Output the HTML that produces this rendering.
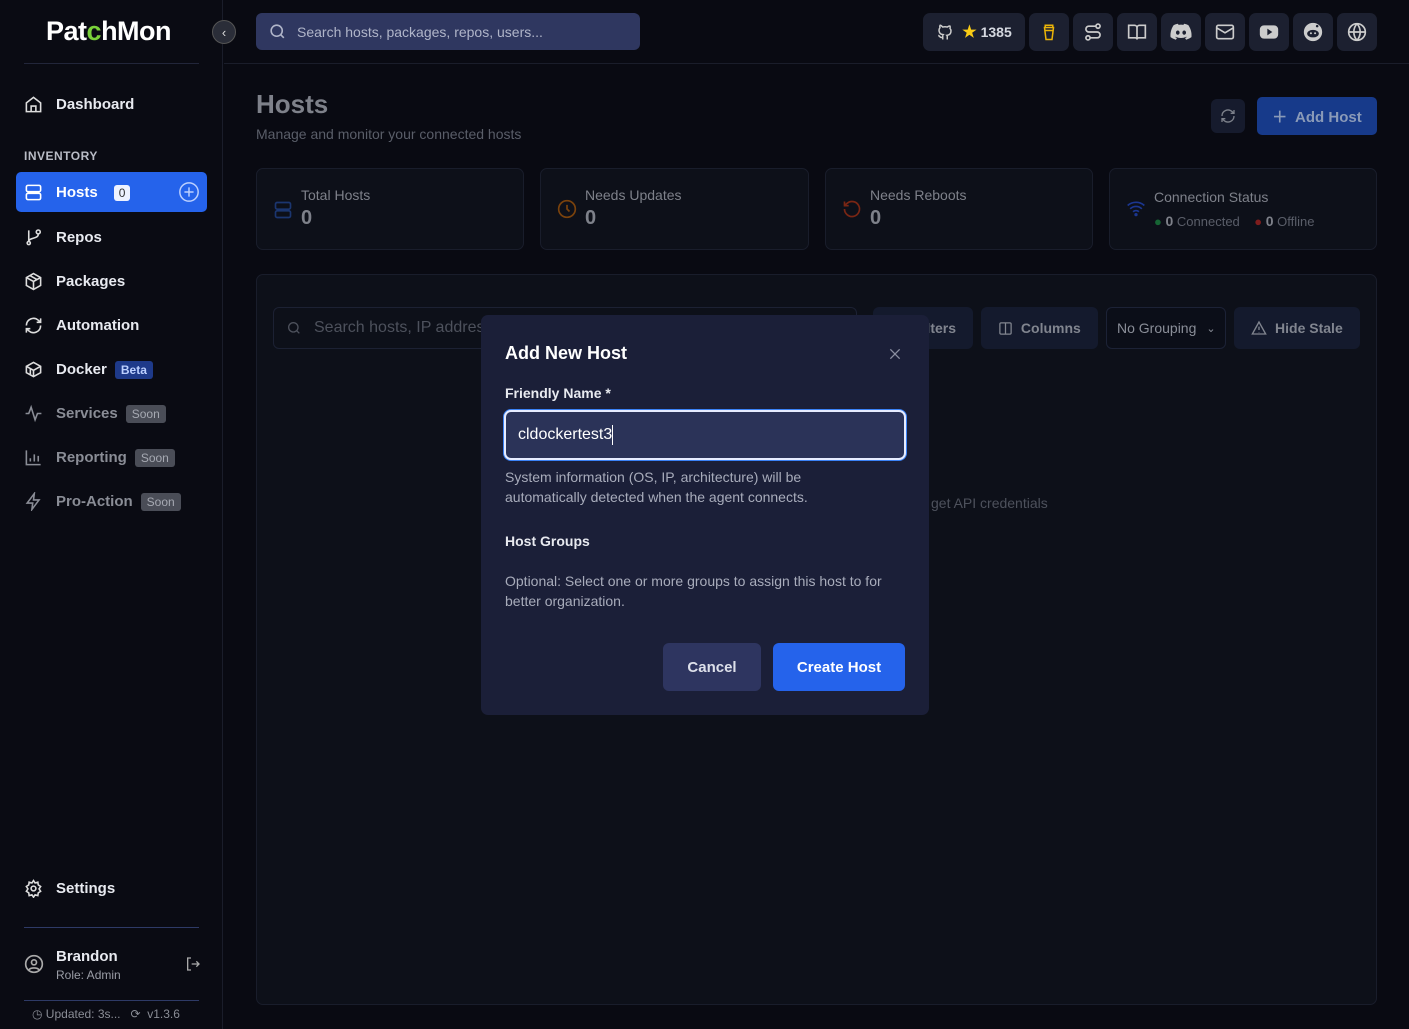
<!DOCTYPE html>
<html><head><meta charset="utf-8"><style>
*{box-sizing:border-box;margin:0;padding:0}
body{width:1409px;height:1029px;overflow:hidden;background:#090a12;font-family:"Liberation Sans",sans-serif;position:relative;color:#fff}
.abs{position:absolute}
svg{display:block}
.side{left:0;top:0;width:223px;height:1029px;background:#0a0b13;border-right:1px solid #1a1d2a}
.nav{position:absolute;left:24px;display:flex;align-items:center;font-size:15px;font-weight:bold;color:#e8eaf0}
.nav svg{margin-right:13px}
.soon{background:#4a4d57;color:#a6a9b2;font-size:12px;font-weight:normal;padding:2px 6px;border-radius:3px;margin-left:8px}
.ib{position:absolute;top:13px;width:40px;height:38px;background:#1c2030;border-radius:7px;display:flex;align-items:center;justify-content:center}
.card{position:absolute;top:168px;height:82px;background:#0d1019;border:1px solid #191d2b;border-radius:7px}
.card .t{position:absolute;left:44px;top:18px;font-size:14px;color:#7e818a}
.card .n{position:absolute;left:44px;top:38px;font-size:20px;font-weight:bold;color:#7e818a}
.card svg{position:absolute;left:16px;top:30px}
.tb{position:absolute;top:307px;height:42px;background:#141a2d;border-radius:6px;color:#81858f;font-size:14px;font-weight:bold;display:flex;align-items:center;justify-content:center}
</style></head><body>

<!-- sidebar -->
<div class="abs side">
  <div class="abs" style="left:46px;top:16px;font-size:27px;font-weight:bold;letter-spacing:-0.5px">Pat<span style="color:#7ad13a">c</span>hMon</div>
  <div class="abs" style="left:24px;top:63px;width:175px;height:1px;background:#22263a"></div>
  <div class="nav" style="top:95px"><svg width="19" height="19" viewBox="0 0 24 24" fill="none" stroke="#ddd" stroke-width="2"><path d="M3 10l9-7 9 7v11H3z"/><path d="M9 21v-7h6v7"/></svg>Dashboard</div>
  <div class="abs" style="left:24px;top:149px;font-size:12px;font-weight:bold;color:#b9bcc6;letter-spacing:0.5px">INVENTORY</div>
  <div class="abs" style="left:16px;top:172px;width:191px;height:40px;background:#2563eb;border-radius:5px"></div>
  <div class="nav" style="top:183px;color:#fff"><svg width="19" height="19" viewBox="0 0 24 24" fill="none" stroke="#fff" stroke-width="2"><rect x="3" y="3" width="18" height="8" rx="2"/><rect x="3" y="13" width="18" height="8" rx="2"/></svg>Hosts<span style="background:#eef2ff;color:#333;font-size:12px;font-weight:normal;padding:1px 5px;border-radius:3px;margin-left:16px">0</span></div>
  <svg class="abs" style="left:178px;top:181px" width="22" height="22" viewBox="0 0 24 24" fill="none" stroke="#bcd0ff" stroke-width="1.6"><circle cx="12" cy="12" r="10"/><path d="M12 7v10M7 12h10"/></svg>
  <div class="nav" style="top:228px"><svg width="19" height="19" viewBox="0 0 24 24" fill="none" stroke="#ddd" stroke-width="2"><circle cx="6" cy="19" r="2"/><circle cx="18" cy="5" r="2.5"/><path d="M6 3v14M18 8c0 6-12 4-12 9"/></svg>Repos</div>
  <div class="nav" style="top:272px"><svg width="19" height="19" viewBox="0 0 24 24" fill="none" stroke="#ddd" stroke-width="2"><path d="M12 2l9 5v10l-9 5-9-5V7z"/><path d="M3 7l9 5 9-5M12 12v10M7.5 4.5l9 5"/></svg>Packages</div>
  <div class="nav" style="top:316px"><svg width="19" height="19" viewBox="0 0 24 24" fill="none" stroke="#ddd" stroke-width="2"><path d="M21 12a9 9 0 0 1-15 6.7L3 16M3 12a9 9 0 0 1 15-6.7L21 8M21 3v5h-5M3 21v-5h5"/></svg>Automation</div>
  <div class="nav" style="top:360px"><svg width="19" height="19" viewBox="0 0 24 24" fill="none" stroke="#ddd" stroke-width="2"><path d="M3 8l9-5 9 5v8l-9 5-9-5z"/><path d="M3 8l9 5 9-5M12 13v8M8 11v7"/></svg>Docker<span style="background:#1e3a8a;color:#bcd0ff;font-size:12px;font-weight:bold;padding:2px 6px;border-radius:3px;margin-left:8px">Beta</span></div>
  <div class="nav" style="top:404px;color:#8a8d96"><svg width="19" height="19" viewBox="0 0 24 24" fill="none" stroke="#8a8d96" stroke-width="2"><path d="M2 12h4l3-8 5 16 3-8h5"/></svg>Services<span class="soon">Soon</span></div>
  <div class="nav" style="top:448px;color:#8a8d96"><svg width="19" height="19" viewBox="0 0 24 24" fill="none" stroke="#8a8d96" stroke-width="2"><path d="M3 3v18h18M8 17v-4M13 17V8M18 17v-7"/></svg>Reporting<span class="soon">Soon</span></div>
  <div class="nav" style="top:492px;color:#8a8d96"><svg width="19" height="19" viewBox="0 0 24 24" fill="none" stroke="#8a8d96" stroke-width="2"><path d="M13 2L4 14h7l-1 8 9-12h-7z"/></svg>Pro-Action<span class="soon">Soon</span></div>
  <div class="nav" style="top:879px"><svg width="19" height="19" viewBox="0 0 24 24" fill="none" stroke="#ddd" stroke-width="2"><circle cx="12" cy="12" r="3"/><path d="M12 2l2 3 3.5-1 .5 3.5 3 2-2 3 2 3-3 2-.5 3.5-3.5-1-2 3-2-3-3.5 1-.5-3.5-3-2 2-3-2-3 3-2 .5-3.5 3.5 1z"/></svg>Settings</div>
  <div class="abs" style="left:24px;top:927px;width:175px;height:1px;background:#2e3a66"></div>
  <svg class="abs" style="left:24px;top:954px" width="20" height="20" viewBox="0 0 24 24" fill="none" stroke="#aaa" stroke-width="2"><circle cx="12" cy="12" r="10"/><circle cx="12" cy="10" r="3"/><path d="M6 19c2-3 10-3 12 0"/></svg>
  <div class="abs" style="left:56px;top:948px;font-size:15px;font-weight:bold;color:#e8eaf0">Brandon</div>
  <div class="abs" style="left:56px;top:968px;font-size:12px;color:#9a9da6">Role: Admin</div>
  <svg class="abs" style="left:185px;top:956px" width="16" height="16" viewBox="0 0 24 24" fill="none" stroke="#aaa" stroke-width="2"><path d="M9 3H4v18h5M10 12h11M17 8l4 4-4 4"/></svg>
  <div class="abs" style="left:24px;top:1000px;width:175px;height:1px;background:#2e3a66"></div>
  <div class="abs" style="left:32px;top:1007px;font-size:12px;color:#8a8d96">◷ Updated: 3s... &nbsp;&nbsp;⟳ &nbsp;v1.3.6</div>
</div>
<div class="abs" style="left:212px;top:20px;width:24px;height:24px;border-radius:50%;background:#2a2d38;border:1px solid #555;display:flex;align-items:center;justify-content:center;color:#ddd;font-size:13px">‹</div>

<!-- header -->
<div class="abs" style="left:224px;top:63px;width:1185px;height:1px;background:#1a1d2a"></div>
<div class="abs" style="left:256px;top:13px;width:384px;height:37px;background:#2f3760;border-radius:6px;display:flex;align-items:center;padding-left:12px;color:#b0b5c9;font-size:14px">
  <svg width="19" height="19" viewBox="0 0 24 24" fill="none" stroke="#b0b5c9" stroke-width="2"><circle cx="11" cy="11" r="7"/><path d="M20 20l-4-4"/></svg><span style="margin-left:10px">Search hosts, packages, repos, users...</span></div>
<div class="ib" style="left:923px;width:102px;color:#d5d8e0;font-size:14px;font-weight:bold">
  <svg width="18" height="18" viewBox="0 0 24 24" fill="none" stroke="#ccc" stroke-width="2"><path d="M9 19c-4 1.5-4-2-6-2.5M15 22v-3.5c0-1 .1-1.4-.5-2 2.8-.3 5.5-1.4 5.5-6a4.6 4.6 0 0 0-1.3-3.2 4.2 4.2 0 0 0-.1-3.2s-1.1-.3-3.5 1.3a12 12 0 0 0-6.2 0C6.5 2.8 5.4 3.1 5.4 3.1a4.2 4.2 0 0 0-.1 3.2A4.6 4.6 0 0 0 4 9.5c0 4.6 2.7 5.7 5.5 6-.6.6-.6 1.2-.5 2V22"/></svg>
  <span style="color:#facc15;margin:0 4px 0 8px;font-size:16px">★</span>1385</div>
<div class="ib" style="left:1029px"><svg width="18" height="20" viewBox="0 0 24 24" fill="none" stroke="#eab308" stroke-width="2"><path d="M5 6h14M6 6l2 16h8l2-16M7 3h10v3H7zM6.5 10h11"/></svg></div>
<div class="ib" style="left:1073px"><svg width="20" height="20" viewBox="0 0 24 24" fill="none" stroke="#ccc" stroke-width="2"><circle cx="18" cy="5" r="2.5"/><circle cx="6" cy="19" r="2.5"/><path d="M15.5 5H7a3.5 3.5 0 0 0 0 7h10a3.5 3.5 0 0 1 0 7H8.5"/></svg></div>
<div class="ib" style="left:1117px"><svg width="20" height="20" viewBox="0 0 24 24" fill="none" stroke="#ccc" stroke-width="2"><path d="M2 4h7a3 3 0 0 1 3 3v14a2 2 0 0 0-2-2H2zM22 4h-7a3 3 0 0 0-3 3v14a2 2 0 0 1 2-2h8z"/></svg></div>
<div class="ib" style="left:1161px"><svg width="22" height="18" viewBox="0 0 24 18"><path fill="#ccc" d="M20 1.5A19 19 0 0 0 15.3 0l-.6 1.2a18 18 0 0 0-5.4 0L8.7 0A19 19 0 0 0 4 1.5C1 6 .2 10.3.6 14.6A19 19 0 0 0 6.4 17.5l1.2-2-1.9-.9.5-.4a13.6 13.6 0 0 0 11.6 0l.5.4-1.9.9 1.2 2a19 19 0 0 0 5.8-2.9c.5-5-.8-9.3-3.4-13.1zM8.5 12c-1.1 0-2-1-2-2.3s.9-2.3 2-2.3 2 1 2 2.3-.9 2.3-2 2.3zm7 0c-1.1 0-2-1-2-2.3s.9-2.3 2-2.3 2 1 2 2.3-.9 2.3-2 2.3z"/></svg></div>
<div class="ib" style="left:1205px"><svg width="20" height="20" viewBox="0 0 24 24" fill="none" stroke="#ccc" stroke-width="2"><rect x="2" y="4" width="20" height="16" rx="2"/><path d="M2 7l10 6 10-6"/></svg></div>
<div class="ib" style="left:1249px"><svg width="20" height="16" viewBox="0 0 24 18"><rect x="1" y="1" width="22" height="16" rx="5" fill="#ccc"/><path d="M10 5v8l6-4z" fill="#1c2030"/></svg></div>
<div class="ib" style="left:1293px"><svg width="20" height="20" viewBox="0 0 24 24"><circle cx="12" cy="12" r="11" fill="#ccc"/><ellipse cx="12" cy="14" rx="7" ry="4.5" fill="#1c2030"/><circle cx="9.5" cy="13.5" r="1.2" fill="#ccc"/><circle cx="14.5" cy="13.5" r="1.2" fill="#ccc"/><circle cx="17" cy="5" r="1.5" fill="#1c2030"/></svg></div>
<div class="ib" style="left:1337px"><svg width="20" height="20" viewBox="0 0 24 24" fill="none" stroke="#ccc" stroke-width="2"><circle cx="12" cy="12" r="10"/><path d="M2 12h20M12 2a15 15 0 0 1 0 20M12 2a15 15 0 0 0 0 20"/></svg></div>

<!-- page -->
<div class="abs" style="left:256px;top:89px;font-size:26px;font-weight:bold;color:#7e818a">Hosts</div>
<div class="abs" style="left:256px;top:126px;font-size:14px;color:#5a5e69">Manage and monitor your connected hosts</div>
<div class="abs" style="left:1211px;top:99px;width:34px;height:34px;background:#161b2d;border-radius:6px;display:flex;align-items:center;justify-content:center"><svg width="16" height="16" viewBox="0 0 24 24" fill="none" stroke="#7c808a" stroke-width="2"><path d="M21 12a9 9 0 0 1-15 6.7L3 16M3 12a9 9 0 0 1 15-6.7L21 8M21 3v5h-5M3 21v-5h5"/></svg></div>
<div class="abs" style="left:1257px;top:97px;width:120px;height:38px;background:#173a8a;border-radius:5px;color:#8a9ab8;font-size:15px;font-weight:bold;display:flex;align-items:center;justify-content:center">＋&nbsp; Add Host</div>

<div class="card" style="left:256px;width:268px"><svg width="20" height="22" viewBox="0 0 24 24" fill="none" stroke="#1b3670" stroke-width="2"><rect x="3" y="3" width="18" height="8" rx="2"/><rect x="3" y="13" width="18" height="8" rx="2"/></svg><div class="t">Total Hosts</div><div class="n">0</div></div>
<div class="card" style="left:540px;width:269px"><svg width="20" height="20" viewBox="0 0 24 24" fill="none" stroke="#7a420c" stroke-width="2"><circle cx="12" cy="12" r="10"/><path d="M12 7v5l3 3"/></svg><div class="t">Needs Updates</div><div class="n">0</div></div>
<div class="card" style="left:825px;width:268px"><svg width="20" height="20" viewBox="0 0 24 24" fill="none" stroke="#7a2614" stroke-width="2"><path d="M3 12a9 9 0 1 0 3-6.7L3 8M3 3v5h5"/></svg><div class="t">Needs Reboots</div><div class="n">0</div></div>
<div class="card" style="left:1109px;width:268px"><svg width="20" height="18" viewBox="0 0 24 20" fill="none" stroke="#1b3690" stroke-width="2"><path d="M2 7a15 15 0 0 1 20 0M5 11a10 10 0 0 1 14 0M8.5 14.5a5 5 0 0 1 7 0"/><circle cx="12" cy="18" r="1" fill="#1b3690"/></svg><div class="t" style="top:20px">Connection Status</div>
<div class="abs" style="left:44px;top:44px;font-size:13px;color:#5a5e69"><span style="color:#166534">●</span> <b style="color:#7e818a;font-size:14px">0</b> Connected &nbsp;&nbsp;&nbsp;<span style="color:#7f1d1d">●</span> <b style="color:#7e818a;font-size:14px">0</b> Offline</div></div>

<div class="abs" style="left:256px;top:274px;width:1121px;height:731px;background:#0d1019;border:1px solid #191d2b;border-radius:7px"></div>
<div class="abs" style="left:273px;top:307px;width:584px;height:42px;border:1px solid #1c2133;border-radius:6px;color:#4d515c;font-size:16px;display:flex;align-items:center;padding-left:12px"><svg width="16" height="16" viewBox="0 0 24 24" fill="none" stroke="#4d515c" stroke-width="2"><circle cx="11" cy="11" r="7"/><path d="M20 20l-4-4"/></svg><span style="margin-left:12px">Search hosts, IP address</span></div>
<div class="tb" style="left:873px;width:100px;justify-content:flex-end;padding-right:17px">Filters</div>
<div class="tb" style="left:981px;width:117px"><svg width="15" height="15" viewBox="0 0 24 24" fill="none" stroke="#81858f" stroke-width="2"><rect x="3" y="3" width="18" height="18" rx="2"/><path d="M12 3v18"/></svg>&nbsp;&nbsp;Columns</div>
<div class="tb" style="left:1106px;width:120px;background:#0b0e18;border:1px solid #1c2236;justify-content:flex-start;padding-left:10px;font-weight:normal;color:#8a8e98">No Grouping <span style="margin-left:10px;font-size:11px">⌄</span></div>
<div class="tb" style="left:1234px;width:126px"><svg width="16" height="16" viewBox="0 0 24 24" fill="none" stroke="#81858f" stroke-width="2"><path d="M12 3L2 21h20z"/><path d="M12 10v5M12 18v.5"/></svg>&nbsp;&nbsp;Hide Stale</div>
<div class="abs" style="left:931px;top:495px;font-size:14px;color:#4d515c">get API credentials</div>

<!-- modal -->
<div class="abs" style="left:481px;top:315px;width:448px;height:400px;background:#1b1f38;border-radius:7px">
  <div class="abs" style="left:24px;top:28px;font-size:18px;font-weight:bold;color:#fff">Add New Host</div>
  <svg class="abs" style="left:406px;top:31px" width="16" height="16" viewBox="0 0 24 24" fill="none" stroke="#8a8ea0" stroke-width="2"><path d="M5 5l14 14M19 5L5 19"/></svg>
  <div class="abs" style="left:24px;top:70px;font-size:14px;font-weight:bold;color:#e8eaf0">Friendly Name *</div>
  <div class="abs" style="left:23px;top:95px;width:402px;height:50px;background:#2b3358;border:2px solid #e6ecff;box-shadow:0 0 0 1px #3b82f6;border-radius:7px;padding-left:12px;display:flex;align-items:center;font-size:16px;color:#fff">cldockertest3<span style="display:inline-block;width:1px;height:20px;background:#fff"></span></div>
  <div class="abs" style="left:24px;top:152px;font-size:14px;line-height:20px;color:#a8acbb;width:335px">System information (OS, IP, architecture) will be automatically detected when the agent connects.</div>
  <div class="abs" style="left:24px;top:218px;font-size:14px;font-weight:bold;color:#e8eaf0">Host Groups</div>
  <div class="abs" style="left:24px;top:256px;font-size:14px;line-height:20px;color:#a8acbb;width:390px">Optional: Select one or more groups to assign this host to for better organization.</div>
  <div class="abs" style="left:182px;top:328px;width:98px;height:48px;background:#2e3560;border-radius:6px;display:flex;align-items:center;justify-content:center;font-size:15px;font-weight:bold;color:#dde0ea">Cancel</div>
  <div class="abs" style="left:292px;top:328px;width:132px;height:48px;background:#2563eb;border-radius:6px;display:flex;align-items:center;justify-content:center;font-size:15px;font-weight:bold;color:#fff">Create Host</div>
</div>
</body></html>
